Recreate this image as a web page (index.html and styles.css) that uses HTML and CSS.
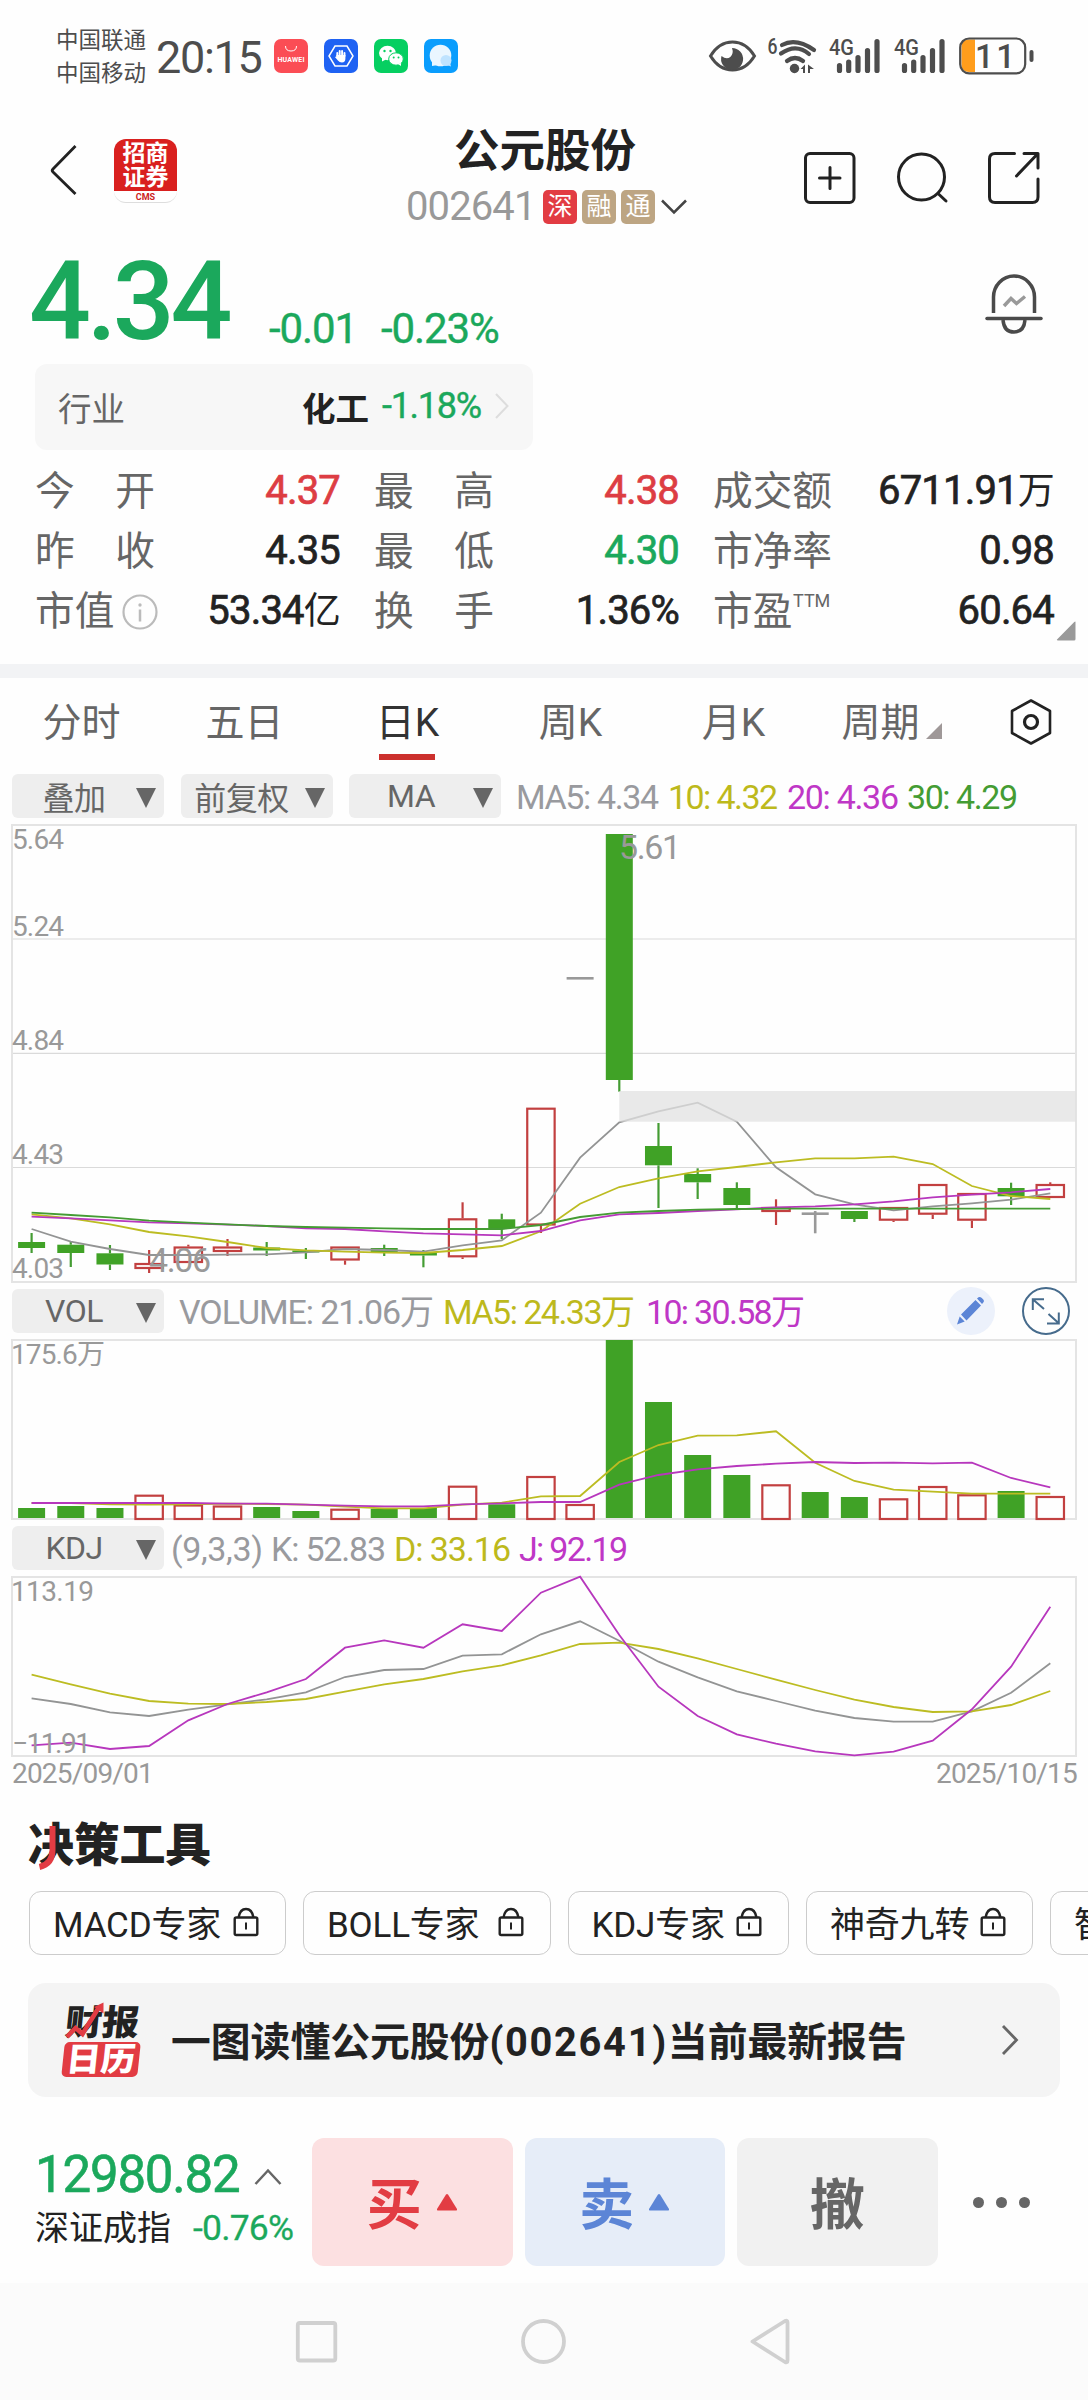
FILE: index.html
```html
<!DOCTYPE html>
<html lang="zh-CN">
<head>
    <meta charset="UTF-8">
    <meta name="viewport" content="width=device-width, initial-scale=1.0">
    <title>公元股份 002641</title>
    <link rel="stylesheet" href="styles.css">
</head>
<body>

    <div class="status">
        <div class="carriers"><span>中国联通</span><span>中国移动</span></div>
        <div class="clock">20:15</div>
        <div class="status-apps">
            <svg width="34" height="34" viewBox="0 0 34 34"><rect width="34" height="34" rx="7" fill="#fb4d55"/><path d="M11.500 7q0 5 5.500 5t5.500-5" fill="none" stroke="#fff" stroke-width="1"/><text x="3.500" y="22.500" font-size="7" font-weight="700" fill="#fff" textLength="27">HUAWEI</text></svg>
            <svg width="34" height="34" viewBox="0 0 34 34"><rect width="34" height="34" rx="7" fill="#1f62f3"/><path d="M11 7h12l6 10-6 10H11L5 17z" fill="none" stroke="#fff" stroke-width="1.500"/><path d="M13.300 17v-3M15.700 16v-4M18.100 16v-4M20.500 17v-3" stroke="#fff" stroke-width="1.900" stroke-linecap="round"/><path d="M12.400 16h9v3.500q0 4-3.500 4-2.500 0-4-2l-3-3.500 1.500-.5z" fill="#fff"/></svg>
            <svg width="34" height="34" viewBox="0 0 34 34"><rect width="34" height="34" rx="7" fill="#06cf61"/><ellipse cx="13.500" cy="14" rx="8.500" ry="7.200" fill="#fff"/><path d="M8 18v4.500l4-2z" fill="#fff"/><ellipse cx="22" cy="20" rx="7.300" ry="6.200" fill="#fff" stroke="#06cf61"/><path d="M24 25l3 2v-3z" fill="#fff"/><circle cx="10.500" cy="12" r="1.200" fill="#06cf61"/><circle cx="16.500" cy="12" r="1.200" fill="#06cf61"/><circle cx="19.700" cy="18.500" r="1" fill="#06cf61"/><circle cx="24.500" cy="18.500" r="1" fill="#06cf61"/></svg>
            <svg width="34" height="34" viewBox="0 0 34 34"><rect width="34" height="34" rx="7" fill="#0a9dfd"/><circle cx="16.500" cy="16.500" r="10.800" fill="#eaf6ff"/><path d="M8 22v5l6-1z" fill="#eaf6ff"/><circle cx="22" cy="21.500" r="5.500" fill="#bfe3ff"/><path d="M23 26l4 1.500-1-4z" fill="#bfe3ff"/></svg>
        </div>
        <svg class="status-signal" width="340" height="50" viewBox="700 30 340 50">
            <path d="M710.500 56Q719 42 732.500 42T754.500 56Q746 70 732.500 70T710.500 56z" fill="none" stroke="#4d4d4d" stroke-width="3"/>
            <path d="M732 48a11 11 0 1 1-10.500 8q5 4 8.800 1 3.700-3.500 1.700-9z" fill="#4d4d4d"/>
            <text class="st-small" x="767.500" y="53.500" font-size="22" textLength="10" lengthAdjust="spacingAndGlyphs">6</text>
            <g fill="none" stroke="#4d4d4d" stroke-width="4.200" stroke-linecap="round">
                <path d="M782 45q14-7.500 32 5M781 53.500q15-10.500 28 .5M787 61q8-6 16 0"/>
            </g>
            <circle cx="794.500" cy="68.500" r="4.700" fill="#4d4d4d"/>
            <path d="M800.500 69l4.500-4.500V73h-2v-4zM808 64.500v8.500h2v-4h4z" fill="#4d4d4d"/>
            <g stroke="#4d4d4d" stroke-width="5.200" stroke-linecap="round">
                <path d="M839.500 65.500v5M848.700 62v8.500M858 57.500v13M867.500 50.500v20M877 41.500v29"/>
                <path d="M904.500 65.500v5M913.700 62v8.500M923 57.500v13M932.500 50.500v20M942 41.500v29"/>
            </g>
            <text class="st-small" x="829" y="55" font-size="22.500" textLength="25" lengthAdjust="spacingAndGlyphs">4G</text>
            <text class="st-small" x="894" y="55" font-size="22.500" textLength="25" lengthAdjust="spacingAndGlyphs">4G</text>
            <path d="M969 39.500h6V72h-6q-7.500 0-7.500-8V47q0-7.500 7.500-7.500z" fill="#ff9d1c"/>
            <rect x="960.200" y="38.500" width="65" height="34.800" rx="9" fill="none" stroke="#4d4d4d" stroke-width="2.200"/>
            <rect x="1029.500" y="50" width="4" height="12" rx="2" fill="#4d4d4d"/>
            <text class="st-small" x="975" y="68" font-size="33" textLength="40">11</text>
        </svg>
    </div>

    <div class="header">
        <svg class="back" width="30" height="60" viewBox="0 0 30 60"><path d="M26.500 6L4 29q-1.500 1.500 0 3L26.500 54" fill="none" stroke="#222" stroke-width="2.800"/></svg>
        <div class="broker"><span>招商<br>证券</span><em>CMS</em></div>
        <div class="stock">
            <h1>公元股份</h1>
            <div class="stock-code">
                <span class="code">002641</span>
                <i class="badge badge-red">深</i><i class="badge">融</i><i class="badge">通</i>
                <svg width="28" height="16" viewBox="0 0 28 16"><path d="M2 1.500l12 12 12-12" fill="none" stroke="#444" stroke-width="2.500"/></svg>
            </div>
        </div>
        <div class="header-icons">
            <svg width="54" height="54" viewBox="0 0 54 54" fill="none" stroke="#222" stroke-width="3" stroke-linecap="round"><rect x="2.500" y="2.500" width="48.500" height="49" rx="4.500"/><path d="M16.500 27h20.500M27 16.500v21"/></svg>
            <svg width="54" height="54" viewBox="0 0 54 54" fill="none" stroke="#222" stroke-width="3" stroke-linecap="round"><circle cx="26.500" cy="26" r="23"/><path d="M43 42.500l8 7.500"/></svg>
            <svg width="54" height="54" viewBox="0 0 54 54" fill="none" stroke="#222" stroke-width="3" stroke-linecap="round" stroke-linejoin="round"><path d="M27.500 2.500H8q-5.500 0-5.500 5.500v38q0 5.500 5.500 5.500h37.500q5.500 0 5.500-5.500V28"/><path d="M37 2.500h14V17M49.500 4L29.500 25"/></svg>
        </div>
    </div>

    <div class="quote">
        <span class="price">4.34</span>
        <span class="change">-0.01</span>
        <span class="change">-0.23%</span>
        <svg class="bell" width="60" height="62" viewBox="0 0 60 62" fill="none" stroke="#4a4a4a" stroke-width="3.500">
            <path d="M9.500 40V24a20.500 21 0 0 1 41 0v16"/><path d="M3 45.500h54" stroke-linecap="round"/><path d="M19 47q1 12 11 12t11-12"/><path d="M20 33l7-7.500 5.500 5L41 23.500" stroke="#999"/>
        </svg>
    </div>

    <div class="industry">
        <span class="industry-label">行业</span>
        <b>化工</b>
        <span class="industry-rate">-1.18%</span>
        <svg width="14" height="26" viewBox="0 0 14 26"><path d="M1 1l11.500 12L1 25" fill="none" stroke="#ddd" stroke-width="2"/></svg>
    </div>

    <div class="stats">
        <div class="stat"><label><i>今</i><i>开</i></label><span class="up">4.37</span></div>
        <div class="stat"><label><i>最</i><i>高</i></label><span class="up">4.38</span></div>
        <div class="stat"><label>成交额</label><span>6711.91<u>万</u></span></div>
        <div class="stat"><label><i>昨</i><i>收</i></label><span>4.35</span></div>
        <div class="stat"><label><i>最</i><i>低</i></label><span class="down">4.30</span></div>
        <div class="stat"><label>市净率</label><span>0.98</span></div>
        <div class="stat">
            <label>市值<svg class="info" width="36" height="36" viewBox="0 0 36 36"><circle cx="18" cy="18" r="16.500" fill="none" stroke="#bbb" stroke-width="2.200"/><path d="M18 15.500v12" stroke="#bbb" stroke-width="2.500"/><circle cx="18" cy="11" r="1.700" fill="#bbb"/></svg></label>
            <span>53.34<u>亿</u></span>
        </div>
        <div class="stat"><label><i>换</i><i>手</i></label><span>1.36%</span></div>
        <div class="stat"><label>市盈<sup>TTM</sup></label><span>60.64</span></div>
        <svg class="corner" width="20" height="20" viewBox="0 0 20 20"><path d="M19.500 1v17q0 1.500-1.500 1.500H2q-2 0-.5-1.500L18 1.200q1.500-1.500 1.500-.2z" fill="#999"/></svg>
    </div>

    <div class="divider"></div>

    <div class="tabs">
        <span>分时</span>
        <span>五日</span>
        <span class="active">日K</span>
        <span>周K</span>
        <span>月K</span>
        <span class="more">周期</span>
        <svg width="44" height="48" viewBox="0 0 44 48" fill="none" stroke="#222"><path d="M22 2.500l19 10.500v22L22 45.500 3 35V13z" stroke-width="2.600" stroke-linejoin="round"/><circle cx="22" cy="24" r="6.500" stroke-width="3.200"/></svg>
    </div>

    <div class="legend">
        <button class="pill">叠加</button>
        <button class="pill">前复权</button>
        <button class="pill">MA</button>
        <svg class="values" width="580" height="44" viewBox="508 774 580 44">
            <text class="c-gray" x="516" y="809" textLength="143">MA5: 4.34</text>
            <text class="c-yellow" x="668" y="809" textLength="110">10: 4.32</text>
            <text class="c-purple" x="787" y="809" textLength="112">20: 4.36</text>
            <text class="c-green" x="907" y="809" textLength="111">30: 4.29</text>
        </svg>
    </div>
    <svg class="chart" id="kline" width="1088" height="471" viewBox="0 818 1088 471"></svg>

    <div class="legend">
        <button class="pill">VOL</button>
        <svg class="values" width="760" height="44" viewBox="171 1289 760 44">
            <text class="c-gray" x="179" y="1324" textLength="255">VOLUME: 21.06万</text>
            <text class="c-yellow" x="443" y="1324" textLength="192">MA5: 24.33万</text>
            <text class="c-purple" x="646" y="1324" textLength="159">10: 30.58万</text>
        </svg>
        <div class="tools">
            <svg width="48" height="48" viewBox="0 0 48 48"><circle cx="24" cy="24" r="24" fill="#ecf1fb"/><path d="M14 27.500L28.500 13l5.500 5.500-14.500 15zM30 11.500l1.500-1.200q1.500-1 3 .5l1.800 1.800q1.500 1.500 0 3L35 17zM12.700 29.500l5 5L10 37.500z" fill="#5c85d6"/></svg>
            <svg width="48" height="48" viewBox="0 0 48 48" fill="none" stroke="#466b8c" stroke-width="2"><circle cx="24" cy="24" r="23"/><path d="M22 22L11 12.500M10.800 23V12.300H22M26.500 27L36.500 36M36.800 25.500V36.500H25"/></svg>
        </div>
    </div>
    <svg class="chart" id="volume" width="1088" height="193" viewBox="0 1333 1088 193"></svg>

    <div class="legend">
        <button class="pill">KDJ</button>
        <svg class="values" width="760" height="44" viewBox="171 1526 760 44">
            <text class="c-gray" x="171" y="1561" textLength="92">(9,3,3)</text>
            <text class="c-gray" x="271" y="1561" textLength="115">K: 52.83</text>
            <text class="c-yellow" x="394" y="1561" textLength="117">D: 33.16</text>
            <text class="c-purple" x="519" y="1561" textLength="109">J: 92.19</text>
        </svg>
    </div>
    <svg class="chart" id="kdj" width="1088" height="190" viewBox="0 1570 1088 190"></svg>
    <div class="dates"><span>2025/09/01</span><span>2025/10/15</span></div>

    <h2 class="tools-title"><span>决<svg width="20" height="46" viewBox="0 0 20 46"><path d="M14.500 1v24q0 14-13 17" fill="none" stroke="#e23c43" stroke-width="6"/></svg></span>策工具</h2>
    <div class="chips">
        <div class="chip chip-1">MACD专家<svg class="lock"><use href="#lock"/></svg></div>
        <div class="chip chip-2">BOLL专家<svg class="lock"><use href="#lock"/></svg></div>
        <div class="chip chip-3">KDJ专家<svg class="lock"><use href="#lock"/></svg></div>
        <div class="chip chip-4">神奇九转<svg class="lock"><use href="#lock"/></svg></div>
        <div class="chip chip-5">智</div>
    </div>

    <div class="report">
        <svg class="report-logo" width="82" height="78" viewBox="60 2001 82 78">
            <g transform="skewX(-6)">
                <text x="278" y="2035" font-size="35" font-weight="900" fill="#222" textLength="74" lengthAdjust="spacingAndGlyphs">财报</text>
                <rect x="279.500" y="2042" width="76" height="35" rx="5" fill="#e23c43"/>
                <text x="283" y="2071" font-size="33" font-weight="900" fill="#fff" textLength="69" lengthAdjust="spacingAndGlyphs">日历</text>
            </g>
            <path d="M67 2037l8.500-9 7 6 16-26" fill="none" stroke="#e23c43" stroke-width="4.500"/><path d="M94 2007l9.500-4.500v11z" fill="#e23c43"/>
        </svg>
        <span class="report-text">一图读懂公元股份<em>(002641)</em>当前最新报告</span>
        <svg class="report-arrow" width="18" height="32" viewBox="0 0 18 32"><path d="M2 2l13.500 14L2 30" fill="none" stroke="#666" stroke-width="2.800"/></svg>
    </div>

    <div class="trade">
        <div class="index">
            <div class="index-value">12980.82<svg width="28" height="18" viewBox="0 0 28 18"><path d="M1.500 16L14 2.500 26.500 16" fill="none" stroke="#666" stroke-width="2.500"/></svg></div>
            <div class="index-name">深证成指<span>-0.76%</span></div>
        </div>
        <button class="btn btn-buy">买<svg width="22" height="19" viewBox="0 0 22 19"><path d="M10 1.500q1-1 2 0l9 14.500q.5 1.500-1 1.500H2q-1.500 0-1-1.500z" fill="currentColor"/></svg></button>
        <button class="btn btn-sell">卖<svg width="22" height="19" viewBox="0 0 22 19"><path d="M10 1.500q1-1 2 0l9 14.500q.5 1.500-1 1.500H2q-1.500 0-1-1.500z" fill="currentColor"/></svg></button>
        <button class="btn btn-cancel">撤</button>
        <div class="dots"><i></i><i></i><i></i></div>
    </div>

    <div class="nav">
        <svg width="1088" height="117" viewBox="0 2283 1088 117" fill="none" stroke="#d0d0d0" stroke-width="3.800" stroke-linejoin="round">
            <rect x="297.800" y="2323" width="37.500" height="37.500" rx="2"/>
            <circle cx="543.500" cy="2341.500" r="20.500"/>
            <path d="M752.500 2341.500L785 2321q2.500-1.200 2.500 1.500v38q0 2.700-2.500 1.500z"/>
        </svg>
    </div>

    <svg class="defs">
        <symbol id="lock" viewBox="0 0 26 30"><path d="M5.500 10.500q1.500-8.500 7.500-8.500t7.500 8.500" fill="none" stroke="#222" stroke-width="2.400"/><rect x="1.700" y="10.500" width="22.600" height="17.500" rx="1.500" fill="none" stroke="#222" stroke-width="2.400"/><path d="M13 15.500v7" stroke="#222" stroke-width="2"/></symbol>
    </svg>

    <script src="chart.js"></script>
</body>
</html>
```
FILE: styles.css
```css
* {
    box-sizing: border-box;
}

body {
    width: 1088px;
    height: 2400px;
    margin: 0;
    overflow: hidden;
    background-color: #fefefe;
    color: #222;
    font-family: Roboto, "Noto Sans CJK SC", sans-serif;
}

h1, h2 {
    margin: 0;
}

i, em {
    font-style: normal;
}

u {
    text-decoration: none;
}

svg {
    display: block;
    flex-shrink: 0;
}

button {
    border: none;
    padding: 0;
    font-family: inherit;
}

.defs {
    width: 0;
    height: 0;
}

/* status bar */
.status {
    display: flex;
    height: 112px;
    padding-left: 56px;
    color: #4d4d4d;
}

.carriers {
    display: flex;
    flex-direction: column;
    width: 100px;
    padding-top: 24px;
    font-size: 22.500px;
    line-height: 32.500px;
}

.clock {
    width: 118px;
    padding-top: 31px;
    font-size: 45px;
    line-height: 54px;
    letter-spacing: -1.300px;
}

.status-apps {
    display: flex;
    gap: 16px;
    padding-top: 39px;
}

.status-signal {
    margin: 30px 0 0 242px;
}

.st-small {
    fill: #4d4d4d;
    font-weight: 500;
}

/* header */
.header {
    display: flex;
    height: 128px;
    padding-left: 49px;
}

.back {
    margin-top: 28px;
}

.broker {
    width: 63px;
    height: 64px;
    margin: 27px 0 0 35px;
    padding-top: 3px;
    border-radius: 12px;
    background: linear-gradient(#d9201f 52px, #fff 52px);
    border-bottom: 1px solid #ddd;
    color: #fff;
    text-align: center;
    font-size: 23px;
    font-weight: 700;
    line-height: 24px;
}

.broker em {
    display: block;
    color: #c22;
    font-size: 9px;
    line-height: 14px;
}

.stock {
    width: 360px;
    margin-left: 188px;
    padding-top: 13px;
}

.stock h1 {
    width: 360px;
    text-align: center;
    font-size: 45.500px;
    font-weight: 700;
    line-height: 54px;
}

.stock-code {
    display: flex;
    align-items: center;
    height: 38px;
    margin-top: 9px;
    padding-left: 41px;
}

.code {
    width: 137px;
    color: #999;
    font-size: 40px;
    line-height: 40px;
    letter-spacing: -.9px;
}

.badge {
    width: 34px;
    height: 34px;
    margin: 0 5px 0 0;
    border-radius: 5px;
    background-color: #bda583;
    color: #fff;
    font-size: 25px;
    line-height: 34px;
    text-align: center;
}

.badge-red {
    background-color: #e23c43;
}

.header-icons {
    display: flex;
    gap: 38px;
    padding-top: 39px;
    margin-left: 78px;
}

/* price */
.quote {
    display: flex;
    height: 124px;
    padding-left: 29px;
    color: #1ba85c;
}

.price {
    width: 240px;
    padding-top: 5px;
    font-size: 109px;
    font-weight: 500;
    line-height: 114px;
    letter-spacing: -4.200px;
}

.change {
    width: 112px;
    padding-top: 64px;
    font-size: 42px;
    line-height: 50px;
    font-weight: 400;
    letter-spacing: -1.100px;
    -webkit-text-stroke: .4px;
}

.bell {
    margin: 33px 0 0 491px;
}

.industry {
    display: flex;
    align-items: center;
    width: 498px;
    height: 86px;
    margin-left: 35px;
    padding: 0 24px 2px 23px;
    border-radius: 12px;
    background-color: #f7f7f7;
    font-size: 33.500px;
}

.industry-label {
    flex: 1;
    color: #666;
}

.industry-rate {
    width: 113px;
    margin-left: 13px;
    color: #1ba85c;
    font-size: 36px;
    letter-spacing: -1.300px;
    -webkit-text-stroke: .4px;
}

.stats {
    position: relative;
    display: grid;
    grid-template-columns: 303px 303px 339px;
    grid-auto-rows: 60px;
    column-gap: 36px;
    height: 214px;
    padding: 12px 0 0 35px;
}

.stat {
    display: flex;
    justify-content: space-between;
    align-items: center;
    font-size: 40px;
    line-height: 60px;
}

.stat label {
    display: flex;
    justify-content: space-between;
    align-items: center;
    width: 120px;
    color: #666;
    font-size: 39.700px;
}

.info {
    margin-right: -3px;
}

.stat sup {
    width: 40px;
    margin-top: -22px;
    font-size: 18px;
    line-height: 20px;
}

.stat span {
    margin: -2px -2px 0 0;
    font-weight: 400;
    letter-spacing: -.8px;
    -webkit-text-stroke: .7px;
}

.stat u {
    font-size: 37px;
    -webkit-text-stroke: 0;
}

.stat .up {
    color: #dd3d43;
}

.stat .down {
    color: #1ba85c;
}

.corner {
    position: absolute;
    right: 12px;
    bottom: 23px;
}

.divider {
    height: 14px;
    background-color: #f2f3f5;
}

/* period tabs */
.tabs {
    display: flex;
    height: 96px;
    color: #666;
    font-size: 39px;
    line-height: 91px;
    text-align: center;
}

.tabs span {
    position: relative;
    width: 163px;
}

.tabs .active {
    color: #333;
}

.tabs .active::after {
    content: "";
    position: absolute;
    left: 53px;
    bottom: 14px;
    width: 56px;
    height: 6px;
    background-color: #cc302d;
}

.tabs .more {
    padding-right: 32px;
}

.tabs .more::after {
    content: "";
    position: absolute;
    left: 111px;
    top: 45px;
    border-left: 16px solid transparent;
    border-bottom: 16px solid #9f9898;
}

.tabs svg {
    margin: 20px 0 0 31px;
}

/* indicator rows */
.legend {
    display: flex;
    height: 44px;
    padding-left: 12px;
}

.pill {
    display: flex;
    align-items: center;
    justify-content: center;
    position: relative;
    width: 152px;
    height: 44px;
    margin-right: 16.500px;
    padding-right: 28px;
    border-radius: 6px;
    background-color: #eee;
    color: #666;
    font-size: 32px;
    letter-spacing: -.5px;
}

.pill::after {
    content: "";
    position: absolute;
    right: 8px;
    top: 14px;
    border: 10px solid transparent;
    border-top: 20px solid #666;
    border-bottom: 0;
}

.pill:nth-child(2) {
    padding-right: 30px;
}

.values {
    margin-left: -9.500px;
    font-size: 34px;
}

.c-gray { fill: #999a9e; }
.c-yellow { fill: #bdb91c; }
.c-purple { fill: #bf37c6; }
.c-green { fill: #449c33; }

.tools {
    display: flex;
    gap: 27px;
    margin: -2px 0 0 16px;
}

.frame { fill: none; stroke: #e4e4e4; stroke-width: 2; }
.grid { stroke: #dadada; stroke-width: 1.200; }
.line { fill: none; stroke-width: 1.800; }
.line-gray { stroke: #939494; }
.line-yellow { stroke: #bcbc22; }
.line-purple { stroke: #b737bd; }
.line-green { stroke: #449c33; }
.body-down { fill: #40a226; }
.body-up { fill: none; stroke: #c24040; stroke-width: 2.200; }
.wick { stroke-width: 2.200; }
.wick-down { stroke: #449c33; }
.wick-up { stroke: #c24040; }
.wick-flat { stroke: #999; stroke-width: 2.600; }
.gap { fill: #e2e2e2; fill-opacity: .75; }
.axis { fill: #999; font-size: 28px; }
.mark { fill: #999; font-size: 34px; }

.dates {
    display: flex;
    justify-content: space-between;
    height: 52px;
    padding: 0 11px 0 12px;
    color: #999;
    font-size: 28px;
    line-height: 28px;
    letter-spacing: -.8px;
}

/* decision tools */
.tools-title {
    height: 79px;
    padding: 3px 0 0 28px;
    font-size: 46px;
    font-weight: 900;
    line-height: 60px;
    letter-spacing: -.3px;
}

.tools-title span {
    position: relative;
}

.tools-title svg {
    position: absolute;
    left: 10px;
    top: 7px;
}

.chips {
    display: flex;
    gap: 17px;
    height: 92px;
    padding-left: 29px;
    overflow: hidden;
}

.chip {
    display: flex;
    flex-shrink: 0;
    align-items: center;
    justify-content: space-between;
    height: 64px;
    padding: 0 26px 3px 23px;
    border: 1.500px solid #ccc;
    border-radius: 12px;
    font-size: 35px;
    letter-spacing: -.2px;
}

.chip-1 { width: 257px; }
.chip-2 { width: 247.500px; }
.chip-3 { width: 221.500px; }
.chip-4 { width: 227px; }
.chip-5 { width: 227px; }

.lock {
    width: 26px;
    height: 30px;
}

.report {
    display: flex;
    align-items: center;
    height: 114px;
    margin: 0 28px;
    padding-left: 32px;
    border-radius: 18px;
    background-color: #f4f4f4;
}

.report-text {
    width: 830px;
    margin: -4px 0 0 29px;
    font-size: 39.800px;
    font-weight: 700;
}

.report-text em {
    letter-spacing: 1.700px;
}

/* bottom bar */
.trade {
    display: flex;
    height: 186px;
    padding: 41px 0 0 35px;
}

.index {
    width: 277px;
    padding-top: 9px;
}

.index-value {
    display: flex;
    align-items: center;
    color: #1ba85c;
    font-size: 51px;
    line-height: 56px;
    letter-spacing: -1.200px;
    -webkit-text-stroke: .6px;
}

.index-value svg {
    margin: 4px 0 0 14px;
}

.index-name {
    padding-top: 3px;
    font-size: 34px;
    line-height: 44px;
    white-space: nowrap;
}

.index-name span {
    margin-left: 22px;
    color: #1ba85c;
    font-size: 35.500px;
    letter-spacing: -.8px;
    -webkit-text-stroke: .3px;
}

.btn {
    display: flex;
    align-items: center;
    justify-content: center;
    gap: 14px;
    width: 200.500px;
    height: 128px;
    margin-right: 12px;
    padding-bottom: 4px;
    border-radius: 12px;
    font-size: 55px;
    font-weight: 700;
}

.btn-buy {
    background-color: #fce0e1;
    color: #e23c43;
}

.btn-sell {
    background-color: #e6edf8;
    color: #5c85d6;
}

.btn-cancel {
    background-color: #f1f1f1;
    color: #666;
}

.btn svg {
    margin-top: 4px;
}

.dots {
    display: flex;
    gap: 12px;
    padding: 59px 0 0 23px;
}

.dots i {
    width: 11px;
    height: 11px;
    border-radius: 50%;
    background-color: #666;
}

.nav {
    height: 117px;
    background-color: #fbfbfb;
}
```
FILE: chart.js
```js
const FIRST = 31.6;
const STEP = 39.18;
const LEFT = 12;
const RIGHT = 1076;

const x = (i) => FIRST + STEP * i;

// type, high, body top, body bottom, low
const candles = [
    ['d', 1233, 1242, 1248, 1253],
    ['d', 1242, 1244.7, 1253, 1267],
    ['d', 1245, 1253.3, 1264.5, 1270],
    ['u', 1250, 1263, 1269, 1273],
    ['u', 1244.7, 1246.5, 1263, 1263],
    ['u', 1239, 1246.5, 1252, 1256],
    ['d', 1242, 1247.5, 1250.5, 1256],
    ['d', 1248, 1250.5, 1252.5, 1259],
    ['u', 1246.5, 1246.5, 1260.5, 1264.7],
    ['d', 1244.7, 1248, 1252, 1256],
    ['d', 1250, 1253, 1255.5, 1267.3],
    ['u', 1202.3, 1218.3, 1257.3, 1259],
    ['d', 1213.7, 1219.3, 1228, 1239],
    ['u', 1107.7, 1107.7, 1225.5, 1233],
    ['f', 978.3, 978.3, 978.3, 978.3],
    ['d', 834, 834, 1080, 1091.7],
    ['d', 1123, 1146, 1165.3, 1208],
    ['d', 1168.3, 1174, 1182.3, 1199],
    ['d', 1182.3, 1188, 1205, 1208],
    ['u', 1199.3, 1207, 1212, 1225],
    ['f', 1211, 1213.7, 1213.7, 1233.3],
    ['d', 1211, 1211, 1219, 1222],
    ['u', 1207, 1207, 1220.7, 1222],
    ['u', 1184, 1184, 1214.7, 1219],
    ['u', 1193, 1193, 1220.7, 1228],
    ['d', 1182.7, 1188, 1196.3, 1205],
    ['u', 1182.3, 1184, 1198, 1198]
];

const volumes = [1508, 1506, 1508, 1494.7, 1504.5, 1505.5, 1507, 1511, 1508.7, 1508.7, 1508, 1485.7, 1504.3, 1476,
    1504, 1340, 1402, 1455, 1475, 1484.3, 1492, 1497, 1498.3, 1486, 1494.3, 1491, 1496];

const priceLines = {
    gray: [1229, 1241.7, 1249, 1255, 1255, 1254.7, 1254.3, 1252.3, 1249, 1250, 1251.7, 1245.3, 1240.3, 1212.7,
        1157.7, 1122.3, 1111.3, 1102.7, 1121.7, 1167.3, 1194.3, 1204.3, 1210.3, 1206.3, 1203.3, 1199.7, 1193.3],
    yellow: [1214.3, 1218.3, 1224.3, 1232, 1236.3, 1242, 1248, 1250.3, 1251.7, 1252.7, 1253, 1250, 1246, 1231.3,
        1203.7, 1187, 1178.3, 1171.3, 1167, 1162.3, 1158.3, 1158.3, 1156.7, 1164, 1186, 1196, 1199],
    purple: [1216.7, 1218.3, 1220.3, 1222.3, 1223.3, 1224.7, 1226, 1228.3, 1229, 1231.3, 1233.3, 1234.3, 1235.3, 1231,
        1220.3, 1214.3, 1213, 1211, 1209.3, 1207.3, 1206.3, 1204.3, 1201.3, 1197.3, 1194.7, 1192.3, 1189],
    green: [1212.7, 1215, 1217.3, 1220.7, 1222.7, 1224.3, 1226, 1227, 1227.7, 1228.3, 1229, 1229, 1229, 1225,
        1217, 1212.7, 1211, 1209.7, 1209, 1208.7, 1208.7, 1208.7, 1208.7, 1208.7, 1208.7, 1208.7, 1208.7]
};

const volumeLines = {
    yellow: [1503, 1503, 1504.3, 1504.7, 1504.3, 1503.7, 1504, 1504.7, 1506.7, 1508.3, 1508.3, 1504.7, 1502.7, 1496.3,
        1496, 1462, 1445, 1435.7, 1435.3, 1431.3, 1462.7, 1481, 1489.7, 1491.7, 1493.7, 1493.7, 1493.7],
    purple: [1503, 1503, 1503, 1503, 1503, 1503.7, 1503.7, 1504.7, 1505.7, 1506.3, 1506.3, 1504.3, 1503.3, 1502,
        1502, 1484.7, 1475, 1469.3, 1466, 1463.7, 1462, 1463, 1462.7, 1463.3, 1462.7, 1478, 1487.3]
};

const kdjLines = {
    gray: [1698.3, 1704, 1712.3, 1716, 1709.7, 1704.3, 1699.3, 1692.3, 1677, 1670, 1669, 1655.7, 1654.3, 1634.3,
        1621.3, 1640.7, 1661.7, 1677.3, 1691.3, 1701, 1710.7, 1718, 1721.7, 1721.7, 1711.3, 1692.7, 1663.3],
    yellow: [1674.7, 1684.3, 1693.7, 1701, 1703.7, 1704, 1702, 1699, 1691.7, 1684.3, 1679, 1671.3, 1665.3, 1655.3,
        1644, 1642.7, 1649, 1658.3, 1669, 1679.7, 1690, 1699.7, 1707, 1712, 1711.3, 1705, 1691],
    purple: [1745.3, 1742.7, 1749, 1746, 1720.3, 1704, 1692.3, 1679, 1647.7, 1640.3, 1647.7, 1624.3, 1631, 1592.7,
        1576.7, 1635, 1686.7, 1716, 1734.3, 1743.7, 1751.3, 1755.3, 1751.7, 1740.7, 1709.3, 1666.7, 1606.7]
};

const frame = (top, bottom) =>
    `<rect class="frame" x="${LEFT}" y="${top}" width="${RIGHT - LEFT}" height="${bottom - top}"/>`;

const lines = (set) => Object.entries(set).map(([name, ys]) =>
    `<polyline class="line line-${name}" points="${ys.map((y, i) => `${x(i).toFixed(1)},${y}`).join(' ')}"/>`).join('');

const label = (cls, left, y, width, text) =>
    `<text class="${cls}" x="${left}" y="${y}" textLength="${width}">${text}</text>`;

const bar = (type, i, top, bottom) => type === 'd'
    ? `<rect class="body-down" x="${x(i) - 13.5}" y="${top}" width="27" height="${bottom - top}"/>`
    : `<rect class="body-up" x="${x(i) - 13.7}" y="${top + 1}" width="27.400" height="${bottom - top - 2}"/>`;

const wick = (cls, i, from, to) =>
    to > from ? `<line class="wick ${cls}" x1="${x(i)}" x2="${x(i)}" y1="${from}" y2="${to}"/>` : '';

function candle([type, high, top, bottom, low], i) {
    if (type === 'f') {
        return `<line class="wick-flat" x1="${x(i) - 13.5}" x2="${x(i) + 13.5}" y1="${top}" y2="${top}"/>` +
            wick('wick-flat', i, high, low);
    }
    const cls = type === 'd' ? 'wick-down' : 'wick-up';
    return bar(type, i, top, bottom) + wick(cls, i, high, top) + wick(cls, i, bottom, low);
}

document.getElementById('kline').innerHTML =
    [939, 1053.3, 1167.5].map((y) => `<line class="grid" x1="${LEFT}" x2="${RIGHT}" y1="${y}" y2="${y}"/>`).join('') +
    frame(825, 1282) +
    candles.map(candle).join('') +
    lines(priceLines) +
    `<rect class="gap" x="${x(15)}" y="1091" width="${RIGHT - x(15)}" height="30.700"/>` +
    label('axis', 12, 849, 52, '5.64') +
    label('axis', 12, 936, 52, '5.24') +
    label('axis', 12, 1050, 52, '4.84') +
    label('axis', 12, 1164, 52, '4.43') +
    label('axis', 12, 1278, 52, '4.03') +
    label('mark', 619, 859, 62, '5.61') +
    label('mark', 149, 1272, 62, '4.06');

document.getElementById('volume').innerHTML =
    frame(1340, 1519) +
    volumes.map((top, i) => {
        const type = candles[i][0] === 'd' || i === 20 ? 'd' : 'u';
        return bar(type, i, top, type === 'd' ? 1518 : 1520);
    }).join('') +
    lines(volumeLines) +
    label('axis', 11, 1364, 94, '175.6万');

document.getElementById('kdj').innerHTML =
    frame(1577, 1756) +
    lines(kdjLines) +
    label('axis', 11, 1601, 83, '113.19') +
    label('axis', 12, 1753, 79, '−11.91');
```
